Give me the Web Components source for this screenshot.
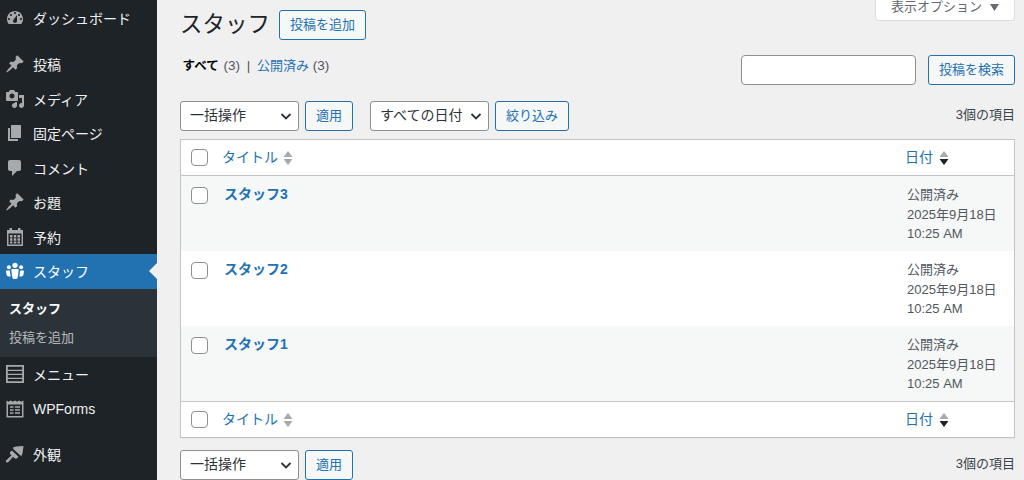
<!DOCTYPE html>
<html lang="ja">
<head>
<meta charset="utf-8">
<title>スタッフ</title>
<style>
  html, body { margin: 0; height: 480px; overflow: hidden; }
  body {
    display: flex;
    background: #f0f0f1;
    color: #3c434a;
    font-family: "Liberation Sans", "Noto Sans CJK JP", sans-serif;
    font-size: 13px;
  }
</style>
</head>
<body>
<wp-sidebar>
  <wp-menu-item icon="dashboard" style="margin-bottom:11.5px">ダッシュボード</wp-menu-item>
  <wp-menu-item icon="pin">投稿</wp-menu-item>
  <wp-menu-item icon="media">メディア</wp-menu-item>
  <wp-menu-item icon="page">固定ページ</wp-menu-item>
  <wp-menu-item icon="comment">コメント</wp-menu-item>
  <wp-menu-item icon="pin">お題</wp-menu-item>
  <wp-menu-item icon="calendar">予約</wp-menu-item>
  <wp-menu-item icon="groups" active>スタッフ</wp-menu-item>
  <wp-submenu>
    <a class="current" slot="current">スタッフ</a>
    <a slot="other">投稿を追加</a>
  </wp-submenu>
  <wp-menu-item icon="menu">メニュー</wp-menu-item>
  <wp-menu-item icon="forms" style="margin-bottom:10.5px">WPForms</wp-menu-item>
  <wp-menu-item icon="brush">外観</wp-menu-item>
</wp-sidebar>

<main style="flex:1;min-width:0;padding:0 9px 0 23px;">
  <wp-page-head heading="スタッフ" action="投稿を追加" options="表示オプション"></wp-page-head>
  <wp-filter-bar search="投稿を検索"></wp-filter-bar>
  <wp-tablenav count="3個の項目" filters style="margin-top:16px"></wp-tablenav>
  <wp-post-table style="margin-top:8px">
    <wp-table-head></wp-table-head>
    <wp-post-row alt heading="スタッフ3"></wp-post-row>
    <wp-post-row heading="スタッフ2"></wp-post-row>
    <wp-post-row alt heading="スタッフ1"></wp-post-row>
    <wp-table-head foot></wp-table-head>
  </wp-post-table>
  <wp-tablenav count="3個の項目" style="margin-top:12px"></wp-tablenav>
</main>

<script>
const ICONS = {
  dashboard: '<path fill-rule="evenodd" d="M3.76 16h12.48c1.1-1.37 1.76-3.11 1.76-5 0-4.42-3.58-8-8-8s-8 3.58-8 8c0 1.89.66 3.63 1.76 5zM10 4c.55 0 1 .45 1 1s-.45 1-1 1-1-.45-1-1 .45-1 1-1zM6 6c.55 0 1 .45 1 1s-.45 1-1 1-1-.45-1-1 .45-1 1-1zm8 0c.55 0 1 .45 1 1s-.45 1-1 1-1-.45-1-1 .45-1 1-1zm-5.37 5.55L12 7v6c0 1.1-.9 2-2 2s-2-.9-2-2c0-.57.24-1.08.63-1.45zM4 10c.55 0 1 .45 1 1s-.45 1-1 1-1-.45-1-1 .45-1 1-1zm12 0c.55 0 1 .45 1 1s-.45 1-1 1-1-.45-1-1 .45-1 1-1z"/>',
  pin: '<path d="M10.44 3.02l1.82-1.82 6.36 6.35-1.83 1.82c-1.05-.68-2.48-.57-3.41.36l-.75.75c-.92.93-1.04 2.35-.35 3.41l-1.83 1.82-2.41-2.41-2.8 2.79c-.42.42-3.38 2.71-3.8 2.29s1.86-3.39 2.28-3.81l2.79-2.79L4.1 9.36l1.83-1.82c1.05.69 2.48.57 3.4-.36l.75-.75c.93-.92 1.05-2.35.36-3.41z"/>',
  media: '<path fill-rule="evenodd" d="M13 11V4c0-.55-.45-1-1-1h-1.67L9 1H5L3.67 3H2c-.55 0-1 .45-1 1v7c0 .55.45 1 1 1h10c.55 0 1-.45 1-1zM7 4.5c1.38 0 2.5 1.12 2.5 2.5S8.38 9.5 7 9.5 4.5 8.38 4.5 7 5.62 4.5 7 4.5zM14 6h5v10.5c0 1.38-1.12 2.5-2.5 2.5S14 17.88 14 16.5s1.12-2.5 2.5-2.5c.17 0 .34.02.5.05V9h-3V6zm-4 8.05V13h2v3.5c0 1.38-1.12 2.5-2.5 2.5S7 17.88 7 16.5 8.12 14 9.5 14c.17 0 .34.02.5.05z"/>',
  page: '<path d="M6 15V2h10v13H6zm-1 1h8v2H3V5h2v11z"/>',
  comment: '<path d="M5 2h9c1.1 0 2 .9 2 2v7c0 1.1-.9 2-2 2h-2l-5 5v-5H5c-1.1 0-2-.9-2-2V4c0-1.1.9-2 2-2z"/>',
  calendar: '<path fill-rule="evenodd" d="M4.500 1h2.500v2h6V1h2.500v2H18v16H2V3h2.500V1zM3.500 6.500v11h13v-11h-13zM5 8h2.500v2.500H5zm3.800 0h2.500v2.500H8.800zm3.700 0H15v2.500h-2.500zM5 11.300h2.500v2.500H5zm3.800 0h2.500v2.500H8.800zm3.700 0H15v2.500h-2.500zM5 14.500h2.500V16.500H5zm3.800 0h2.500V16.500H8.800zm3.700 0H15V16.500h-2.500z"/>',
  groups: '<circle cx="10" cy="4.300" r="2.600"/><circle cx="3.900" cy="6.300" r="2"/><circle cx="16.100" cy="6.300" r="2"/><path d="M7.300 8h5.400c.6 0 1 .4 1 1l-1 7.500c-.2 1-1.200 1.500-2.700 1.500s-2.500-.5-2.700-1.500l-1-7.500c0-.6.4-1 1-1zM1.500 9.500h3.300l.9 6c-1.800.2-3.700-.3-4-1.200l-.7-3.800c0-.6.100-1 .5-1zM18.500 9.500h-3.300l-.9 6c1.800.2 3.700-.3 4-1.200l.7-3.800c0-.6-.1-1-.5-1z"/>',
  menu: '<path fill-rule="evenodd" d="M1 1h18v18H1zM2.800 2.800v3h14.400v-3zm0 4.200v2.800h14.400V7zm0 4v2.800h14.400V11zm0 4v2.200h14.400V15z"/>',
  forms: '<path fill-rule="evenodd" d="M1.500 1.500l2.200 1.200 2-1.200 2.100 1.200 2.200-1.200 2.100 1.200 2.100-1.200 2.100 1.200 2.200-1.200V18.500h-17zM3 5.500V17h14V5.500zM5 7.300h3.500v1.400H5zm5 0h5v1.400h-5zM5 10.300h3.500v1.400H5zm5 0h5v1.400h-5zM5 13.300h3.500v1.400H5zm5 0h5v1.400h-5z"/>',
  brush: '<path d="M8 3.500l3-1 7.500-.5-1 7.500-1.200 2.800-7.800-7zM7.200 6.800l6.300 6-1.300 1.500c-.9.700-2 .6-3-.3L8 12.800l-4.300 5c-.8.8-2 1-2.600.2-.5-.7-.2-1.500.4-2.100l5-4.300-1-1.200c-.8-1-.7-2.300.3-3.200z"/>'
};

function shadow(el, html) {
  const template = document.createElement('template');
  template.innerHTML = html;
  el.attachShadow({ mode: 'open' }).appendChild(template.content.cloneNode(true));
}

class WpSidebar extends HTMLElement {
  constructor() {
    super();
    shadow(this, `
      <style>
        :host { display: block; width: 157px; height: 480px; flex: none; background: #1d2327; padding-top: 1px; box-sizing: border-box; overflow: hidden; }
      </style>
      <slot></slot>`);
  }
}

class WpMenuItem extends HTMLElement {
  constructor() {
    super();
    shadow(this, `
      <style>
        :host { display: flex; align-items: center; position: relative; height: 34.500px; color: #f0f0f1; font-size: 14px; }
        :host([active]) { background: #2271b1; color: #fff; }
        :host([active])::after {
          content: ""; position: absolute; right: 0; top: 50%; margin-top: -8px;
          border: 8px solid transparent; border-right-color: #f0f0f1; border-left-width: 0;
        }
        svg { width: 20px; height: 20px; margin: 0 8px 0 5px; fill: #a7aaad; flex: none; }
        :host([active]) svg { fill: #fff; }
      </style>
      <svg viewBox="0 0 20 20">${ICONS[this.getAttribute('icon')] || ''}</svg>
      <slot></slot>`);
  }
}

class WpSubmenu extends HTMLElement {
  constructor() {
    super();
    shadow(this, `
      <style>
        :host { display: flex; flex-direction: column; background: #2c3338; padding: 5px 0 6px 9px; height: 68.500px; box-sizing: border-box; }
        ::slotted(a) { display: block; height: 29px; line-height: 29px; font-size: 13px; color: rgba(240,246,252,.7); }
        ::slotted(a.current) { color: #fff; font-weight: 700; }
      </style>
      <slot name="current"></slot>
      <slot name="other"></slot>`);
  }
}

class WpButton extends HTMLElement {
  constructor() {
    super();
    shadow(this, `
      <style>
        :host { display: inline-flex; flex: none; }
        button {
          height: 30px; padding: 0 10px 3px; font: inherit; font-size: 13px; color: #2271b1;
          background: #f6f7f7; border: 1px solid #2271b1; border-radius: 3px; white-space: nowrap;
        }
      </style>
      <button type="button"><slot></slot></button>`);
  }
}

class WpSelect extends HTMLElement {
  constructor() {
    super();
    const width = this.getAttribute('width') || '119';
    shadow(this, `
      <style>
        :host { display: inline-block; position: relative; flex: none; width: ${width}px; height: 30px; }
        select {
          appearance: none; width: 100%; height: 100%; box-sizing: border-box; margin: 0;
          padding: 0 24px 2px 9px; font: inherit; font-size: 14px; color: #2c3338;
          background: #fff; border: 1px solid #8c8f94; border-radius: 3px;
        }
        svg { position: absolute; right: 6px; top: 8px; width: 14px; height: 14px; fill: none; stroke: #2c3338; stroke-width: 1.800; pointer-events: none; }
      </style>
      <select><option>${this.getAttribute('label')}</option></select>
      <svg viewBox="0 0 14 14"><path d="M2.500 5l4.500 4.500L11.500 5"/></svg>`);
  }
}

class WpPageHead extends HTMLElement {
  constructor() {
    super();
    shadow(this, `
      <style>
        :host { display: flex; justify-content: space-between; align-items: flex-start; height: 40px; }
        .left { display: flex; align-items: center; gap: 9px; padding-top: 10px; }
        h1 { margin: 0; font-size: 22.500px; font-weight: 400; line-height: 30px; color: #1d2327; }
        .options {
          width: 140px; height: 21px; box-sizing: border-box; background: #fff;
          border: 1px solid #dcdcde; border-top: 0; border-radius: 0 0 4px 4px;
          display: flex; justify-content: center; align-items: flex-end; gap: 8px;
          color: #646970; font-size: 13px; line-height: 12px; overflow: hidden; padding-bottom: 7px;
        }
        .options svg { width: 9px; height: 7px; fill: #646970; margin-bottom: 2px; }
      </style>
      <div class="left">
        <h1>${this.getAttribute('heading')}</h1>
        <wp-button>${this.getAttribute('action')}</wp-button>
      </div>
      <div class="options"><span>${this.getAttribute('options')}</span><svg viewBox="0 0 9 7"><path d="M0 0h9L4.500 7z"/></svg></div>`);
  }
}

class WpFilterBar extends HTMLElement {
  constructor() {
    super();
    shadow(this, `
      <style>
        :host { display: flex; justify-content: space-between; align-items: center; height: 30px; margin-top: 15px; }
        .links { padding-left: 2.500px; font-size: 13.500px; color: #50575e; padding-bottom: 12px; }
        b { color: #000; font-size: 12.500px; margin-right: 1px; }
        a { color: #2271b1; font-size: 13px; }
        .sep { margin: 0 3px; }
        .search { display: flex; gap: 12px; }
        input { width: 175px; height: 30px; box-sizing: border-box; margin: 0; background: #fff; border: 1px solid #8c8f94; border-radius: 4px; }
      </style>
      <div class="links"><b>すべて</b> (3) <span class="sep">|</span> <a>公開済み</a> (3)</div>
      <div class="search"><input type="search"><wp-button>${this.getAttribute('search')}</wp-button></div>`);
  }
}

class WpTablenav extends HTMLElement {
  constructor() {
    super();
    const filters = this.hasAttribute('filters') ? `
      <wp-select label="すべての日付" width="119" style="margin-left:11px"></wp-select>
      <wp-button>絞り込み</wp-button>` : '';
    shadow(this, `
      <style>
        :host { display: flex; align-items: center; gap: 6px; height: 30px; }
        .count { margin-left: auto; color: #3c434a; font-size: 13px; padding-bottom: 5px; }
      </style>
      <wp-select label="一括操作"></wp-select>
      <wp-button>適用</wp-button>
      ${filters}
      <span class="count">${this.getAttribute('count')}</span>`);
  }
}

class WpPostTable extends HTMLElement {
  constructor() {
    super();
    shadow(this, `
      <style>
        :host { display: block; background: #fff; border: 1px solid #c3c4c7; box-shadow: 0 1px 1px rgba(0,0,0,.04); }
      </style>
      <slot></slot>`);
  }
}

const CHECKBOX_CSS = `
  .check { width: 17px; height: 17px; box-sizing: border-box; margin: 0; flex: none; appearance: none; background: #fff; border: 1px solid #8c8f94; border-radius: 4px; }`;

class WpTableHead extends HTMLElement {
  constructor() {
    super();
    const sort = (down) => `<svg viewBox="0 0 10 14"><path fill="#a7aaad" d="M5 0l4.500 6h-9z"/><path fill="${down}" d="M5 14L.5 8h9z"/></svg>`;
    shadow(this, `
      <style>
        ${CHECKBOX_CSS}
        :host { display: grid; grid-template-columns: 1fr 109px; align-items: center; height: 36px; box-sizing: border-box; border-bottom: 1px solid #c3c4c7; color: #2271b1; font-size: 14px; }
        :host([foot]) { border-bottom: 0; border-top: 1px solid #c3c4c7; }
        .col { display: flex; align-items: center; }
        .first { padding-left: 10px; gap: 14px; }
        .col span { padding-bottom: 3px; }
        svg { width: 10px; height: 14px; margin-left: 6px; }
        .first svg { margin-left: -9px; }
      </style>
      <div class="col first"><input class="check" type="checkbox"><span>タイトル</span>${sort('#a7aaad')}</div>
      <div class="col"><span>日付</span>${sort('#1d2327')}</div>`);
  }
}

class WpPostRow extends HTMLElement {
  constructor() {
    super();
    shadow(this, `
      <style>
        ${CHECKBOX_CSS}
        :host { display: grid; grid-template-columns: 1fr 107px; height: 75px; box-sizing: border-box; padding-top: 9px; background: #fff; }
        :host([alt]) { background: #f6f7f7; }
        .first { display: flex; padding-left: 10px; gap: 16px; }
        .check { margin-top: 2px; }
        strong { color: #2271b1; font-size: 14px; line-height: 19.500px; }
        .date { color: #50575e; font-size: 13px; line-height: 19.500px; }
      </style>
      <div class="first"><input class="check" type="checkbox"><strong>${this.getAttribute('heading')}</strong></div>
      <div class="date">公開済み<br>2025年9月18日<br>10:25 AM</div>`);
  }
}

customElements.define('wp-sidebar', WpSidebar);
customElements.define('wp-menu-item', WpMenuItem);
customElements.define('wp-submenu', WpSubmenu);
customElements.define('wp-button', WpButton);
customElements.define('wp-select', WpSelect);
customElements.define('wp-page-head', WpPageHead);
customElements.define('wp-filter-bar', WpFilterBar);
customElements.define('wp-tablenav', WpTablenav);
customElements.define('wp-post-table', WpPostTable);
customElements.define('wp-table-head', WpTableHead);
customElements.define('wp-post-row', WpPostRow);
</script>
</body>
</html>
